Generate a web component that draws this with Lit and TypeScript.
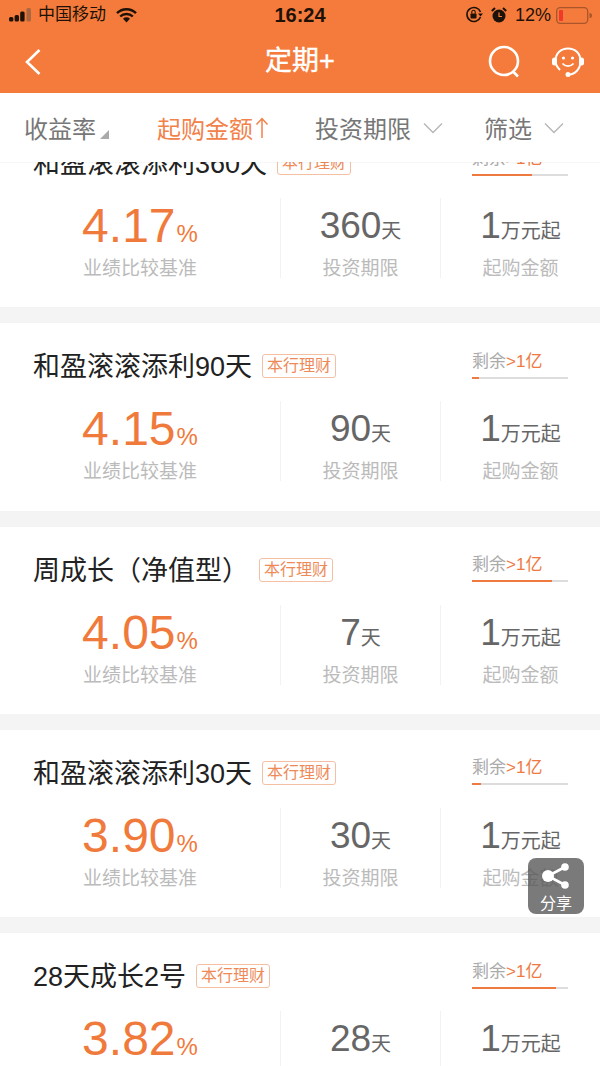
import { LitElement, html, css, svg } from "lit";
import { customElement } from "lit/decorators.js";

const products = [
  { name: "和盈滚滚添利360天", rate: "4.17", days: "360", pct: 62 },
  { name: "和盈滚滚添利90天", rate: "4.15", days: "90", pct: 7 },
  { name: "周成长（净值型）", rate: "4.05", days: "7", pct: 83 },
  { name: "和盈滚滚添利30天", rate: "3.90", days: "30", pct: 9 },
  { name: "28天成长2号", rate: "3.82", days: "28", pct: 88 },
];

const chevron = svg`<svg class="chev" width="20" height="12" viewBox="0 0 20 12"><path d="M1 1.5 10 10.5 19 1.5" fill="none" stroke="#b5b5b5" stroke-width="1.3"/></svg>`;

@customElement("app-root")
export class AppRoot extends LitElement {
  static styles = css`
    :host {
      display: block;
      position: relative;
      width: 600px;
      height: 1066px;
      overflow: hidden;
      background: #fff;
      font-family: "Liberation Sans", "Noto Sans CJK SC", sans-serif;
    }
    .page { display: flex; flex-direction: column; height: 1066px; }
    .head { background: #f47b3b; height: 93px; flex: none; display: flex; flex-direction: column; }
    .status { height: 30px; display: flex; align-items: center; padding: 0 8px 0 9px; color: #1e1208; position: relative; }
    .carrier { font-size: 17px; margin-left: 6px; line-height: 30px; }
    .wifi { margin-left: 10px; }
    .time { position: absolute; left: 0; right: 0; top: 0; text-align: center; font-weight: 700; font-size: 20px; line-height: 31px; }
    .status-right { margin-left: auto; display: flex; align-items: center; }
    .alarm { margin-left: 8px; }
    .batt-text { font-size: 18px; margin: 0 5px 0 8px; }
    .nav { flex: 1; display: flex; align-items: center; padding: 0 16px 0 24px; position: relative; }
    .title { position: absolute; left: 0; right: 0; top: 13px; text-align: center; color: #fff; font-size: 27px; line-height: 36px; -webkit-text-stroke: 0.4px #fff; }
    .nav-icons { margin-left: auto; display: flex; gap: 30px; align-items: center; }
    .filter { flex: none; height: 69px; display: grid; grid-template-columns: 133px 158px 169px auto; padding-left: 24px; align-items: center; background: #fff; font-size: 24px; color: #777; position: relative; z-index: 1; box-shadow: 0 1px 1px rgba(0,0,0,.03); }
    .f { display: flex; align-items: center; white-space: nowrap; }
    .f.on { color: #f2814a; }
    .arrow { margin-left: 2px; }
    .tri { width: 0; height: 0; border-style: solid; border-width: 0 0 9px 9px; border-color: transparent transparent #aaa transparent; margin: 13px 0 0 4px; }
    .chev { margin-left: 12px; }
    .list { flex: 1; overflow: hidden; background: #f4f4f4; }
    .inner { margin-top: -42px; display: flex; flex-direction: column; gap: 16px; }
    .card { background: #fff; height: 187.33px; flex: none; box-sizing: border-box; padding-top: 24px; }
    .top { height: 38px; display: flex; align-items: center; padding: 0 32px 0 33px; }
    .name { font-size: 27px; color: #222; white-space: nowrap; margin: 0 10px 3px 0; }
    .tag { font-size: 16px; line-height: 22px; color: #ee8a58; border: 1px solid #f5bfa3; border-radius: 3px; padding: 0 4px; white-space: nowrap; }
    .remain { margin-left: auto; width: 96px; flex: none; margin-bottom: 4px; }
    .remain-text { font-size: 17px; line-height: 24px; color: #aaa; white-space: nowrap; }
    .remain-text b { font-weight: 400; color: #ee7a42; }
    .bar { height: 2px; background: #ddd; margin-top: 3px; }
    .bar i { display: block; height: 2px; background: #ee7a42; }
    .stats { margin-top: 16px; height: 80px; display: grid; grid-template-columns: 280px 160px 160px; }
    .col { display: flex; flex-direction: column; align-items: center; border-left: 1px solid #f2f2f2; box-sizing: border-box; }
    .col:first-child { border-left: none; }
    .val { height: 56px; line-height: 56px; white-space: nowrap; color: #666; }
    .rate { font-size: 48px; color: #f07a3c; }
    .rate small { font-size: 24px; margin-left: 1px; }
    .num { font-size: 37px; }
    .num small { font-size: 20px; }
    .lab { font-size: 19px; line-height: 18px; margin-top: 6px; color: #bbb; white-space: nowrap; }
    .share { position: absolute; left: 528px; top: 858px; width: 56px; height: 56px; border-radius: 8px; background: rgba(85,85,85,.78); display: flex; flex-direction: column; align-items: center; color: #fff; font-size: 16px; line-height: 20px; padding-top: 5px; box-sizing: border-box; }
    .share span { margin-top: 1px; }
  `;

  render() {
    return html`<div class="page">
      <div class="head">
        <div class="status">
          <svg width="23" height="14" viewBox="0 0 23 14">
            <rect x="0" y="9" width="4.4" height="4.5" rx="1.5" fill="#1e1208"/>
            <rect x="5.6" y="7" width="4.4" height="6.5" rx="1.5" fill="#1e1208"/>
            <rect x="11.2" y="3.5" width="4.4" height="10" rx="1.5" fill="#1e1208"/>
            <rect x="17.5" y="0" width="4.4" height="13.5" rx="1.5" fill="#a8673f"/>
          </svg>
          <span class="carrier">中国移动</span>
          <svg class="wifi" width="21" height="15" viewBox="0 0 21 15">
            <path d="M1 5.2a13.5 13.5 0 0 1 19 0M4.2 8.5a9 9 0 0 1 12.6 0" fill="none" stroke="#1e1208" stroke-width="2.4"/>
            <path d="M7 10.8a5 5 0 0 1 7 0L10.5 14.5z" fill="#1e1208"/>
          </svg>
          <span class="time">16:24</span>
          <div class="status-right">
            <svg width="18" height="18" viewBox="0 0 18 18">
              <path d="M15.5 11A7 7 0 1 1 15.5 6" fill="none" stroke="#1e1208" stroke-width="1.6"/>
              <path d="M13 7.5h5l-2.5 3z" fill="#1e1208"/>
              <rect x="5.5" y="7.5" width="6" height="5" rx=".8" fill="#1e1208"/>
              <path d="M6.8 7.5V6a1.7 1.7 0 0 1 3.4 0v1.5" fill="none" stroke="#1e1208" stroke-width="1.1"/>
            </svg>
            <svg class="alarm" width="16" height="16" viewBox="0 0 16 16">
              <circle cx="8" cy="9" r="6.5" fill="#1e1208"/>
              <path d="M8 5.5V9.5H11" fill="none" stroke="#f47b3b" stroke-width="1.2"/>
              <path d="M.8 4 4 1M12 1l3.2 3" stroke="#1e1208" stroke-width="2"/>
            </svg>
            <span class="batt-text">12%</span>
            <svg width="36" height="17" viewBox="0 0 36 17">
              <rect x=".7" y=".7" width="31" height="15.6" rx="3.5" fill="none" stroke="#a8562a" stroke-width="1.3"/>
              <rect x="3" y="3" width="4" height="11" rx="1" fill="#f0392b"/>
              <path d="M33.5 6v5a2.5 2.5 0 0 0 0-5z" fill="#a8562a"/>
            </svg>
          </div>
        </div>
        <div class="nav">
          <svg width="18" height="28" viewBox="0 0 18 28"><path d="M15.5 2 3 14 15.5 26" fill="none" stroke="#fff" stroke-width="2.6"/></svg>
          <span class="title">定期+</span>
          <div class="nav-icons">
            <svg width="34" height="34" viewBox="0 0 34 34">
              <circle cx="16" cy="16" r="14" fill="none" stroke="#fff" stroke-width="2.6"/>
              <path d="M25 26.5l5 5" stroke="#fff" stroke-width="2.6"/>
            </svg>
            <svg width="32" height="32" viewBox="0 0 32 32">
              <path d="M8 24C5 21 3.5 18 3.5 15C3.500 7 9 2.500 16 2.500S28.500 7 28.500 15C28.500 23 23 28.500 17 28.500" fill="none" stroke="#fff" stroke-width="2"/>
              <rect x="0" y="11.500" width="5" height="8" rx="2.500" fill="#fff"/>
              <rect x="27" y="11.500" width="5" height="8" rx="2.500" fill="#fff"/>
              <circle cx="16" cy="28.500" r="2.500" fill="#fff"/>
              <circle cx="11.500" cy="12" r="1.600" fill="#fff"/><circle cx="20.500" cy="12" r="1.600" fill="#fff"/>
              <path d="M10.500 17.500c3 3.500 8 3.500 11 0" fill="none" stroke="#fff" stroke-width="1.800"/>
            </svg>
          </div>
        </div>
      </div>
      <div class="filter">
        <div class="f">收益率<span class="tri"></span></div>
        <div class="f on">起购金额<svg class="arrow" width="14" height="22" viewBox="0 0 14 22"><path d="M7 21V1.500M1.500 7.500 7 1.500l5.500 6" fill="none" stroke="#f2814a" stroke-width="1.500"/></svg></div>
        <div class="f">投资期限${chevron}</div>
        <div class="f">筛选${chevron}</div>
      </div>
      <div class="list"><div class="inner">
        ${products.map(p => html`<div class="card">
          <div class="top">
            <span class="name">${p.name}</span>
            <span class="tag">本行理财</span>
            <div class="remain">
              <div class="remain-text">剩余<b>&gt;1亿</b></div>
              <div class="bar"><i style="width:${p.pct}%"></i></div>
            </div>
          </div>
          <div class="stats">
            <div class="col"><div class="val rate">${p.rate}<small>%</small></div><div class="lab">业绩比较基准</div></div>
            <div class="col"><div class="val num">${p.days}<small>天</small></div><div class="lab">投资期限</div></div>
            <div class="col"><div class="val num">1<small>万元起</small></div><div class="lab">起购金额</div></div>
          </div>
        </div>`)}
      </div></div>
      <div class="share">
        <svg width="32" height="30" viewBox="0 0 32 30">
          <path d="M8 13 25 4M8 13 25 22" stroke="#fff" stroke-width="2.600"/>
          <circle cx="8" cy="13" r="6" fill="#fff"/>
          <circle cx="25" cy="4" r="3.800" fill="#fff"/>
          <circle cx="25" cy="22" r="3.800" fill="#fff"/>
        </svg>
        <span>分享</span>
      </div>
    </div>`;
  }
}
